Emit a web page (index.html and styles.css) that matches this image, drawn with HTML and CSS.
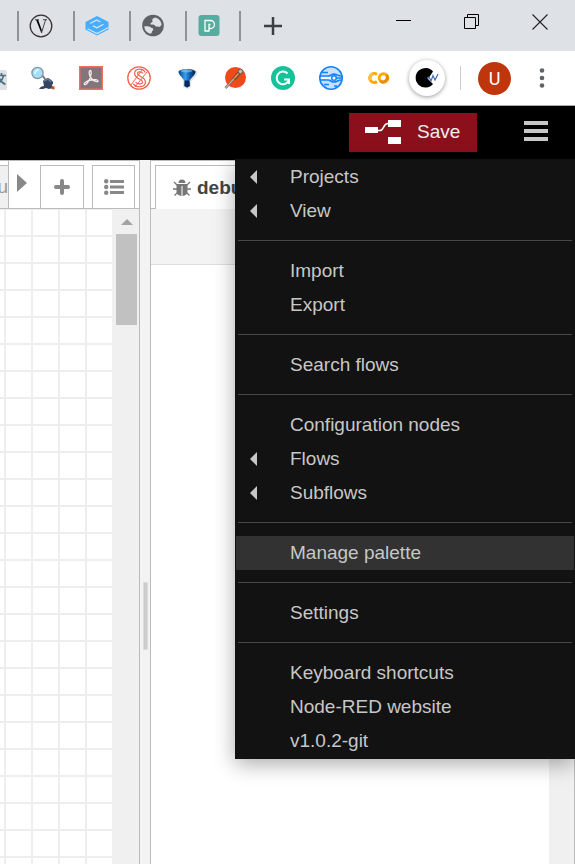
FILE: index.html
```html
<!DOCTYPE html>
<html lang="en">
<head>
<meta charset="utf-8">
<meta name="viewport" content="width=device-width, initial-scale=1">
<title>Node-RED</title>
<link rel="stylesheet" href="styles.css">
</head>
<body>
<div class="tabstrip">
  <div class="browser-tabs">
    <a class="browser-tab" href="#" aria-label="V"><svg width="24" height="24" viewBox="0 0 24 24"><circle cx="12" cy="12" r="10.800" fill="none" stroke="#333" stroke-width="1.300"/><path d="M6 5.700h4M14 5.700h4M16.500 6l-4 13" fill="none" stroke="#444" stroke-width="1"/><path d="M7.200 6h2l3.600 10-.5 3z" fill="#000"/></svg></a>
    <a class="browser-tab" href="#" aria-label="Diamond"><svg width="24" height="24" viewBox="0 0 24 24"><path d="M12 2 23.500 8v7.500L12 21.500.5 15.500V8z" fill="#46adff"/><path d="m2.500 14.800 9.500 4.700 11.500-6" fill="none" stroke="#dee1e6" stroke-width="1.200"/><path d="m15.500 8-3.700-2L5 9.500M8 11.800l4 2 6.500-3.500" fill="none" stroke="#dee1e6" stroke-width="1.300"/></svg></a>
    <a class="browser-tab" href="#" aria-label="Website"><svg width="24" height="24" viewBox="0 0 24 24"><circle cx="12" cy="11.500" r="10.800" fill="#5f6368"/><path d="M14 3.500c-2 1-3.500 2-2.500 3.700.5 1.300-2.200.8-2 2.800.3 1.300 4 0 5 2 .5 1.300 2.500.5 4 1l2-2C20.500 8 18.500 4.500 14 3.500zM3.300 12.300c2 0 4.500-.3 6 .8.8 1.200 3 .8 3 2.500 0 1.200-1.500 1-1.500 2.700 0 1.200-1 1.500-2.500 1.200-3-1.300-5-3.700-5-7.200z" fill="#dee1e6"/></svg></a>
    <a class="browser-tab" href="#" aria-label="P"><svg width="24" height="24" viewBox="0 0 24 24"><rect x="1.500" y="1" width="21" height="21" rx="3" fill="#55ada0"/><path d="M8 6.500h5.500a4 4 0 0 1 0 8H12V17H8zM12 14v-3.500h1.500" fill="none" stroke="#fff" stroke-width="1.300"/></svg></a>
  </div>
  <button class="bare new-tab" aria-label="New tab"><svg width="20" height="20" viewBox="0 0 20 20"><path d="M10 1v18M1 10h18" stroke="#3c4043" stroke-width="2.500"/></svg></button>
  <div class="window-controls">
    <button class="bare" aria-label="Minimize"><svg width="16" height="16" viewBox="0 0 16 16"><path d="M0 6.500h15" stroke="#000"/></svg></button>
    <button class="bare" aria-label="Restore"><svg width="16" height="16" viewBox="0 0 16 16"><path d="M.5 3.500h11v11H.500zM3.500 3V.5h11v11H12" fill="none" stroke="#000"/></svg></button>
    <button class="bare" aria-label="Close"><svg width="16" height="16" viewBox="0 0 16 16"><path d="m.5.500 15 15M15.500.500l-15 15" stroke="#222" stroke-width="1.100"/></svg></button>
  </div>
</div>

<div class="toolbar">
  <div class="extensions">
    <button class="bare" aria-label="Translate"><svg width="24" height="24" viewBox="0 0 24 24"><path d="M0 4h22a2 2 0 0 1 2 2v18H0z" fill="#dfe2e5"/><path d="M14 9.500h9M18.500 7v3M20.500 10c-1 4-3 6-6 8M16 12c1.500 3 3 5 6.500 6.500" fill="none" stroke="#4f7186" stroke-width="1.700"/></svg></button>
    <button class="bare" aria-label="Inspector"><svg width="24" height="24" viewBox="0 0 24 24"><path d="m11 9 3 4" stroke="#777" stroke-width="2"/><path d="M8 23c1-2 3-3 5-3l-1-5c2-3 6-4 8-1 2 1 3 3 1 5l1 3-4 1-3-1-3 1z" fill="#34435f"/><path d="m13 15 4-2 3 3" fill="none" stroke="#60799f" stroke-width="1.500"/><path d="m20.500 20 3 .5v3l-3-.5z" fill="#b65631"/><circle cx="6.500" cy="7" r="5.600" fill="#a3e0f7" stroke="#8195a2" stroke-width="1.300"/><path d="M4 8c0-3 2-4 4-4" fill="none" stroke="#e1f8ff" stroke-width="1.500"/></svg></button>
    <button class="bare" aria-label="PDF"><svg width="24" height="24" viewBox="0 0 24 24"><path d="M.75.750h22.500v22.500H.750z" fill="#83757a" stroke="#f36f5b" stroke-width="1.500"/><path d="M11 4.500c1.500-.5 1.500 3 .5 6-1.500 4.500-4 8.500-6 8-1.500-1 2-3.700 6.500-4.500 3.500-.6 7-.5 7 1s-4 .5-6.500-2.500C10 10 9.500 5.500 11 4.500z" fill="none" stroke="#f5eeee" stroke-width="1.300"/></svg></button>
    <button class="bare" aria-label="S"><svg width="24" height="24" viewBox="0 0 24 24" fill="none" stroke="#f0634f"><circle cx="12" cy="12" r="11.200" stroke-width="1.300"/><path d="M17 7c-1.500-3.500-8-3.500-8 .5 0 4.500 8 4 8 8.500 0 4-7 4.500-9.500 1" stroke-width="4"/><path d="M17 7c-1.500-3.500-8-3.500-8 .5 0 4.500 8 4 8 8.500 0 4-7 4.500-9.500 1" stroke="#fff" stroke-width="1.600"/><path d="M4 19 15 4M8 21 20 6" stroke-width="1"/></svg></button>
    <button class="bare" aria-label="Funnel"><svg width="24" height="24" viewBox="0 0 24 24"><defs><linearGradient id="funnel"><stop stop-color="#0a3f91"/><stop offset=".4" stop-color="#3ba0ea"/><stop offset=".65" stop-color="#0f5fb5"/><stop offset="1" stop-color="#031c45"/></linearGradient></defs><path d="M4 5c4-3 15-3 18 0 2 3-4 8-6 11v4l-3 3-5-2v-5z" fill="#aaa" opacity=".35"/><path d="M3.500 5.500C5 2 18.500 2 20.500 5.500c.5 2.500-4 6-6.300 9.500l.5 5-2.700 1.500L9.500 20l.3-5C7.500 11.500 3 8 3.500 5.500z" fill="url(#funnel)"/><path d="m9.500 14.500 5 0 .3 5.500-2.800 1.500L9.300 20z" fill="#07295e"/><ellipse cx="11.500" cy="5" rx="6" ry="1.500" fill="#9bdcff" opacity=".5"/></svg></button>
    <button class="bare" aria-label="Postman"><svg width="24" height="24" viewBox="0 0 24 24"><circle cx="12.500" cy="11.500" r="10.500" fill="#f04a1b"/><path d="m2.500 22 10-11" stroke="#694b40" stroke-width="2.500"/><path d="m2.500 22 10-11" stroke="#bdb2a5" stroke-width="1.300"/><path d="m11 13 5-6" stroke="#665044" stroke-width="4"/><path d="m11 12.500 4.500-5" stroke="#f18e30" stroke-width="1.800"/><circle cx="17.500" cy="5.500" r="2.200" fill="#c5c3bc" stroke="#655950"/></svg></button>
    <button class="bare" aria-label="Grammarly"><svg width="24" height="24" viewBox="0 0 24 24"><circle cx="12" cy="12" r="12" fill="#15c39a"/><path d="M16.500 7.500a6.300 6.300 0 1 0 1 7.500M13 13.500h5v4.500" fill="none" stroke="#fff" stroke-width="2"/></svg></button>
    <button class="bare" aria-label="Planet"><svg width="24" height="24" viewBox="0 0 24 24"><circle cx="12" cy="12" r="11" fill="#c9e1fc"/><path d="M3 6.500h6M15 20h3M5 18.500h5" stroke="#1583ff" stroke-width="1.500"/><path d="M1 10h8c2.500 0 3-1.800 6-1.800S18.500 10 23 10M1 14h8c2.500 0 3 2 6 2s3.500-2 8-2" fill="none" stroke="#1583ff" stroke-width="1.700"/><path d="M2 12h11" stroke="#fff" stroke-width="1.500"/><path d="M17 12h6" stroke="#1583ff" stroke-width="1.500"/><circle cx="15" cy="12" r="2.300" fill="#fff" stroke="#1583ff" stroke-width="1.500"/><circle cx="12" cy="12" r="11.200" fill="none" stroke="#1583ff" stroke-width="1.600"/></svg></button>
    <button class="bare" aria-label="Colab"><svg width="24" height="24" viewBox="0 0 24 24" fill="none" stroke-width="3"><path d="M10 8.500a4.500 4.500 0 1 0 0 7" stroke="#f9ab00"/><path d="M6 8a4.500 4.500 0 0 0-2.500 6" stroke="#fbc13c"/><circle cx="16.500" cy="12" r="4.300" stroke="#f9ab00"/><path d="M13.500 15a4.300 4.300 0 0 0 6-6" stroke="#e98b14"/></svg></button>
    <button class="bare active-extension" aria-label="Chart"><svg width="24" height="24" viewBox="0 0 24 24"><path d="M18 5.500A9.800 9.800 0 1 0 18 18l-5-5z" fill="#000"/><path d="m12 12.500 2-1.500 2 4 2-5.500 2 4.500 3-6" fill="none" stroke="#426eb2" stroke-width="1.200"/></svg></button>
  </div>
  <div class="profile">
    <button class="bare avatar" aria-label="Profile">U</button>
    <button class="bare" aria-label="Browser menu"><svg width="24" height="24" viewBox="0 0 24 24" fill="#5f6368"><circle cx="12" cy="4.500" r="2.300"/><circle cx="12" cy="12" r="2.300"/><circle cx="12" cy="19.500" r="2.300"/></svg></button>
  </div>
</div>

<header class="header">
  <button class="bare save"><svg width="36" height="24" viewBox="0 0 36 24"><path d="M0 7h13v6H0zM23 0h13v7H23zM23 17h13v7H23z" fill="#fff"/><path d="M13 10.500h2c4 0 3-7 8-7" fill="none" stroke="#fff" stroke-width="1.500"/></svg>Save</button>
  <div class="menu-anchor">
    <button class="bare menu-button" aria-label="Menu"><svg width="24" height="20" viewBox="0 0 24 20" fill="#c7c7c7"><path d="M0 0h24v4H0zM0 8h24v4H0zM0 16h24v4H0z"/></svg></button>
    <nav class="menu">
      <a class="item sub" href="#">Projects</a>
      <a class="item sub" href="#">View</a>
      <hr>
      <a class="item" href="#">Import</a>
      <a class="item" href="#">Export</a>
      <hr>
      <a class="item" href="#">Search flows</a>
      <hr>
      <a class="item" href="#">Configuration nodes</a>
      <a class="item sub" href="#">Flows</a>
      <a class="item sub" href="#">Subflows</a>
      <hr>
      <a class="item selected" href="#">Manage palette</a>
      <hr>
      <a class="item" href="#">Settings</a>
      <hr>
      <a class="item" href="#">Keyboard shortcuts</a>
      <a class="item" href="#">Node-RED website</a>
      <a class="item" href="#">v1.0.2-git</a>
    </nav>
  </div>
</header>

<main class="main">
  <section class="workspace">
    <div class="flow-tabs">
      <a class="flow-tab" href="#"><span>bu</span></a>
      <button class="bare scroll-right" aria-label="Scroll tabs"><svg width="12" height="18" viewBox="0 0 12 18"><path d="M0 0v18l10-9z" fill="#888"/></svg></button>
      <button class="bare tab-button" aria-label="Add flow"><svg width="16" height="16" viewBox="0 0 16 16"><path d="M8 2v12M2 8h12" stroke="#888" stroke-width="4" stroke-linecap="round"/></svg></button>
      <button class="bare tab-button" aria-label="List flows"><svg width="20" height="16" viewBox="0 0 20 16" fill="#888"><circle cx="2.200" cy="2.200" r="2.200"/><circle cx="2.200" cy="8" r="2.200"/><circle cx="2.200" cy="13.800" r="2.200"/><path d="M6 1h14v3H6zM6 6.500h14v3H6zM6 12h14v3H6z"/></svg></button>
    </div>
    <div class="canvas-row">
      <div class="canvas"></div>
      <div class="scrollbar"><svg width="12" height="6" viewBox="0 0 12 6"><path d="m6 0 6 6H0z" fill="#a3a3a3"/></svg><div class="thumb"></div></div>
    </div>
  </section>
  <div class="separator"><div class="handle"></div></div>
  <section class="sidebar">
    <div class="side-tabs">
      <a class="side-tab" href="#"><svg width="18" height="18" viewBox="0 0 18 18"><path d="M5.500 4a3.500 3.500 0 0 1 7 0zM3.500 5h11v7a5 4.500 0 0 1-5 5V7h-1v10a5 4.500 0 0 1-5-5z" fill="#777"/><path d="M1 3 4 6m13-3-3 3M0 10h4m10 0h4M1.500 16.500 5 13m11.500 3.500L13 13" stroke="#777" stroke-width="1.300"/></svg>debug</a>
    </div>
    <div class="side-tools"></div>
    <div class="side-body"><div class="side-scroll"></div></div>
  </section>
</main>
</body>
</html>
```
FILE: styles.css
```css
* { box-sizing: border-box; }

body {
  margin: 0;
  min-height: 100vh;
  display: flex;
  flex-direction: column;
  overflow: hidden;
  background: #fff;
  font: 19px/34px "Liberation Sans", Arial, sans-serif;
}

svg { display: block; flex: none; }
a { color: inherit; text-decoration: none; }

.bare {
  padding: 0;
  border: 0;
  background: none;
  color: inherit;
  font: inherit;
  flex: none;
}

/* Browser chrome */
.tabstrip {
  height: 51px;
  display: flex;
  align-items: center;
  background: #dee1e6;
}

.browser-tabs { display: flex; padding-left: 17px; }

.browser-tab {
  width: 56px;
  height: 30px;
  padding-left: 10px;
  display: flex;
  align-items: center;
  border-left: 2px solid #909397;
}

.browser-tab:last-child { border-right: 2px solid #909397; }
.new-tab { margin-left: 22px; }

.window-controls {
  display: flex;
  gap: 52px;
  margin-left: auto;
  margin-bottom: 8px;
  padding-right: 27px;
}

.toolbar {
  height: 55px;
  display: flex;
  align-items: center;
  justify-content: space-between;
  overflow: hidden;
  border-bottom: 1px solid #a9aea9;
}

.extensions {
  display: flex;
  align-items: center;
  gap: 24px;
  margin-left: -17px;
}

.active-extension {
  margin: 0 -6px;
  padding: 6px;
  border-radius: 50%;
  box-shadow: 0 1px 4px #0006;
}

.profile {
  display: flex;
  align-items: center;
  gap: 19px;
  padding-right: 21px;
}

.profile::before {
  content: "";
  width: 1px;
  height: 24px;
  background: #ccc;
}

.avatar {
  width: 33px;
  height: 33px;
  margin-left: -2px;
  border-radius: 50%;
  background: #bf360c;
  color: #fff;
  font: 18px/33px Roboto, sans-serif;
}

/* Editor header */
.header {
  height: 54px;
  padding: 0 27px 2px 0;
  display: flex;
  align-items: center;
  justify-content: flex-end;
  gap: 47px;
  background: #000;
}

.save {
  width: 128px;
  height: 39px;
  padding-left: 16px;
  display: flex;
  align-items: center;
  gap: 16px;
  background: #8c101c;
  color: #eee;
}

.menu-anchor { display: flex; margin-bottom: 2px; }

.menu {
  position: absolute;
  z-index: 1;
  top: 159px;
  right: 0;
  width: 340px;
  border: 1px solid #111;
  background: #121212;
  box-shadow: 0 5px 20px #0005;
  color: #c7c7c7;
}

.item {
  height: 34px;
  padding-left: 14px;
  display: flex;
  align-items: center;
}

.item::before {
  content: "";
  width: 7px;
  height: 14px;
  margin-right: 33px;
}

.sub::before {
  background: #c7c7c7;
  clip-path: polygon(0 50%, 100% 0, 100% 100%);
}

.selected { background: #323232; }

.menu hr {
  height: 1px;
  margin: 12px 2px 13px;
  border: 0;
  background: #484848;
}

/* Editor body */
.main { flex: 1; display: flex; }

.workspace {
  width: 140px;
  display: flex;
  flex-direction: column;
  border: solid #bbb;
  border-width: 1px 1px 0 0;
}

.flow-tabs, .side-tabs {
  height: 48px;
  display: flex;
  align-items: flex-end;
  border-bottom: 1px solid #bbb;
}

.flow-tab {
  width: 8px;
  height: 43px;
  display: flex;
  justify-content: flex-end;
  align-items: center;
  overflow: hidden;
  border-top: 1px solid #bbb;
  background: #f0f0f0;
  color: #999;
}

.scroll-right {
  width: 32px;
  height: 47px;
  padding: 0 0 4px 8px;
  border-left: 1px solid #bbb;
}

.tab-button {
  width: 44px;
  height: 43px;
  display: grid;
  place-items: center;
  border: 1px solid #bbb;
  border-bottom: 0;
}

.tab-button + .tab-button { margin-left: 8px; width: 43px; }

.canvas-row { flex: 1; display: flex; }

.canvas {
  flex: 1;
  background:
    linear-gradient(#eee 2px, transparent 2px) 0 -1px / 27px 27px,
    linear-gradient(90deg, #eee 2px, transparent 2px) 4px 0 / 27px 27px;
}

.scrollbar {
  width: 27px;
  padding: 10px 2px 0 4px;
  display: flex;
  flex-direction: column;
  align-items: center;
  gap: 9px;
  background: #f0f0f0;
}

.thumb { width: 100%; height: 91px; background: #c1c1c1; }

.separator {
  width: 10px;
  display: flex;
  align-items: center;
  justify-content: center;
  background: #f3f3f3;
}

.handle {
  width: 5px;
  height: 68px;
  margin-top: 208px;
  border: 1px solid #ddd;
  background: #ccc;
}

.sidebar {
  flex: 1;
  display: flex;
  flex-direction: column;
  border: solid #bbb;
  border-width: 1px 1px 0;
}

.side-tabs { padding-left: 4px; }

.side-tab {
  width: 160px;
  height: 44px;
  margin-bottom: -1px;
  padding-left: 17px;
  display: flex;
  align-items: center;
  gap: 6px;
  border: 1px solid #bbb;
  border-bottom: 0;
  background: #fff;
  color: #444;
  font-weight: bold;
}

.side-tools {
  height: 56px;
  border-bottom: 1px solid #ddd;
  background: #f3f3f3;
}

.side-body { flex: 1; display: flex; justify-content: flex-end; }
.side-scroll { width: 25px; background: #f0f0f0; }
```
